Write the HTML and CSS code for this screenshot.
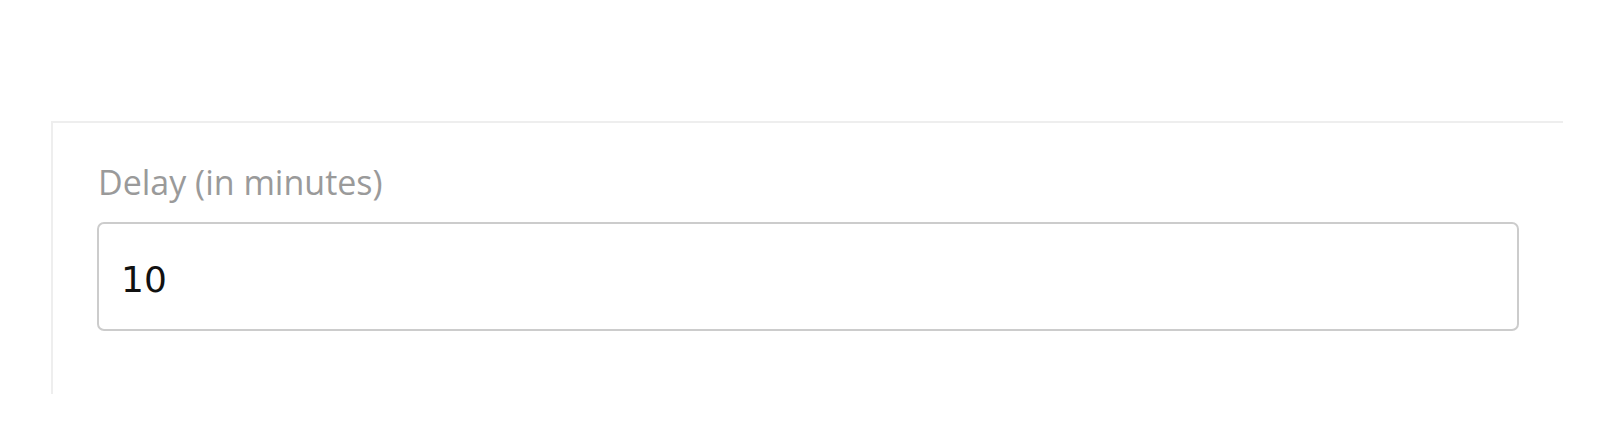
FILE: index.html
```html
<!DOCTYPE html>
<html>
<head>
    <title>Delay</title>
    <link rel="stylesheet" href="styles.css">
</head>
<body>
    <div class="panel">
        <label class="field-label" for="delay">Delay (in minutes)</label>
        <input class="field-input" type="text" id="delay" name="delay" value="10">
    </div>
</body>
</html>
```

FILE: styles.css
```css
body {
    margin: 0;
    background-color: #fff;
    font-family: "Open Sans", Lato, sans-serif;
}

.panel {
    width: 1512px;
    margin: 121px 0 0 51px;
    padding: 39px 44px 63px 44px;
    box-sizing: border-box;
    border-top: 2px solid #eeeeee;
    border-left: 2px solid #eeeeee;
}

.field-label {
    display: block;
    font-size: 34px;
    line-height: 1.2;
    color: #9a9a9a;
    margin: 0 0 19px 1px;
}

.field-input {
    display: block;
    width: 100%;
    height: 109px;
    box-sizing: border-box;
    padding: 7px 22px 0 22px;
    border: 2px solid #cccccc;
    border-radius: 7px;
    font-family: "DejaVu Sans", sans-serif;
    font-size: 36px;
    color: #111;
    background: #fff;
    outline: none;
}
```
